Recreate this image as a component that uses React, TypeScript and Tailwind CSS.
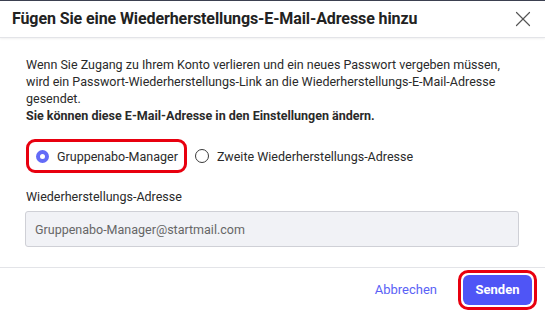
import { X } from "lucide-react";

function Radio({ checked }: { checked: boolean }) {
  return checked ? (
    <span className="w-[13px] h-[13px] rounded-full border-[4px] border-[#636bf7] bg-white shrink-0" />
  ) : (
    <span className="w-[14px] h-[14px] rounded-full border border-[#3a3a3a] bg-white shrink-0" />
  );
}

export default function App() {
  return (
    <div className="w-[545px] h-[311px] bg-white border-t border-[#3b4050] flex flex-col font-['Roboto',Arial,sans-serif] text-[#2a2a2a] overflow-hidden">
      {/* Header */}
      <div className="h-[37px] shrink-0 flex items-center justify-between pl-3 pr-[9px] border-b border-[#e3e4e8] shadow-[0_1px_2px_rgba(0,0,0,0.06)]">
        <h1 className="text-[16px] font-bold text-[#222] tracking-[-0.1px]">Fügen Sie eine Wiederherstellungs-E-Mail-Adresse hinzu</h1>
        <X size={26} strokeWidth={1.1} className="text-[#555]" />
      </div>

      {/* Body */}
      <div className="px-[26px] pt-[18px] text-[12.5px] leading-[17px]">
        <p>
          Wenn Sie Zugang zu Ihrem Konto verlieren und ein neues Passwort vergeben müssen,
          wird ein Passwort-Wiederherstellungs-Link an die Wiederherstellungs-E-Mail-Adresse
          gesendet.
        </p>
        <p className="font-bold">Sie können diese E-Mail-Adresse in den Einstellungen ändern.</p>

        <div className="mt-[15px] flex items-center">
          <label className="w-[161px] h-[34px] flex items-center gap-2 border-[3px] border-[#e8000f] rounded-[9px] pl-[7px]">
            <Radio checked />
            <span>Gruppenabo-Manager</span>
          </label>
          <label className="ml-[8px] flex items-center gap-[8px]">
            <Radio checked={false} />
            <span>Zweite Wiederherstellungs-Adresse</span>
          </label>
        </div>

        <p className="mt-[15px]">Wiederherstellungs-Adresse</p>
        <div className="mt-[6px] -ml-px h-[36px] flex items-center border border-[#cfd0d6] rounded-[3px] bg-[#f1f2f6] pl-[9px] text-[#666]">
          Gruppenabo-Manager@startmail.com
        </div>
      </div>

      {/* Footer */}
      <div className="mt-auto h-[44px] border-t border-[#e3e4e8] flex items-center justify-end pr-[8px] gap-[21px]">
        <button className="text-[13px] text-[#5a62f6]">Abbrechen</button>
        <div className="border-[3px] border-[#e8000f] rounded-[10px] p-[2px]">
          <button className="w-[69px] h-[30px] rounded-[6px] bg-[#4f55f6] text-white text-[13px] font-bold">
            Senden
          </button>
        </div>
      </div>
    </div>
  );
}
